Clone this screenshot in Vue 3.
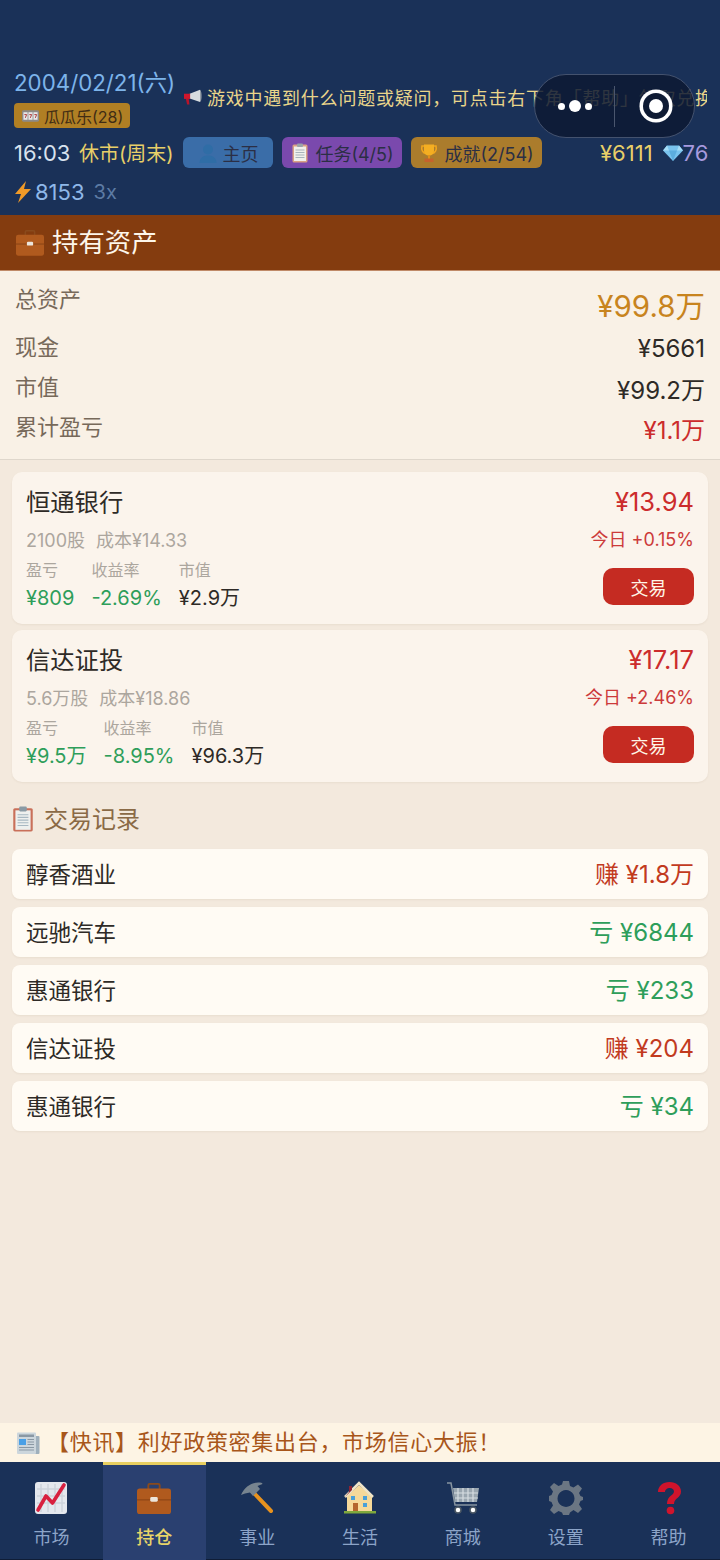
<template>
  <div class="page">
    <header class="top">
      <div class="row-one">
        <div class="date-col">
          <div class="date">2004/02/21(六)</div>
          <div class="lucky">
            <svg class="lucky-ico" viewBox="0 0 18 12"><rect width="18" height="12" rx="1.5" fill="#8d8a86"/><rect x="1.5" y="2" width="4.4" height="8" fill="#e8e8e8"/><rect x="6.8" y="2" width="4.4" height="8" fill="#e8e8e8"/><rect x="12.1" y="2" width="4.4" height="8" fill="#e8e8e8"/><path d="M2.500 4.500h2.400L3.500 8M7.800 4.500h2.400L8.800 8M13.100 4.500h2.400L14.100 8" fill="none" stroke="#a33" stroke-width="1"/></svg>
            <span>瓜瓜乐(28)</span>
          </div>
        </div>
        <div class="ticker">
          <svg class="horn" viewBox="0 0 20 18"><path d="M7 5 18 .8v13L7 10z" fill="#d8dde0"/><path d="M1 5h6.500v5.500H1z" fill="#d0162c"/><path d="M3 10.500h3l.8 6H4.300z" fill="#b8142a"/><path d="M18 .8c1.200 1 1.600 3.600 1.600 6.500s-.4 5.500-1.600 6.500z" fill="#9aa3aa"/></svg>
          <span class="ticker-text">游戏中遇到什么问题或疑问，可点击右下角「帮助」领取兑换</span>
        </div>
      </div>
      <div class="row-two">
        <span class="time">16:03</span>
        <span class="market">休市(周末)</span>
        <span class="chip chip-blue">
          <svg class="chip-ico" viewBox="0 0 20 20"><circle cx="10" cy="6.500" r="5" fill="#2f6da6"/><path d="M1.500 20c0-5 3.500-7.500 8.500-7.500s8.500 2.500 8.500 7.500z" fill="#2f6da6"/></svg>
          主页
        </span>
        <span class="chip chip-purple">
          <svg class="chip-ico" viewBox="0 0 20 20"><rect x="2.500" y="1.500" width="15" height="18" rx="1.500" fill="#d9a184"/><rect x="4" y="3.500" width="12" height="14.500" fill="#f0f0ec"/><rect x="7" y=".5" width="6" height="3.500" rx="1" fill="#9aa3aa"/><path d="M5.500 7h9M5.500 9.500h9M5.500 12h9M5.500 14.500h9" stroke="#a8b4bc" stroke-width="1"/></svg>
          任务(4/5)
        </span>
        <span class="chip chip-gold">
          <svg class="chip-ico" viewBox="0 0 20 20"><path d="M3 3h14c1 4-1 7-4 7.500H7C4 10 2 7 3 3z" fill="none" stroke="#f0a51e" stroke-width="1.600"/><path d="M5 1.500h10v6c0 3-2 5-5 5s-5-2-5-5z" fill="#f4ae22"/><rect x="9" y="12" width="2" height="4" fill="#e0901a"/><rect x="5.500" y="15.500" width="9" height="3.500" rx=".5" fill="#c6622c"/></svg>
          成就(2/54)
        </span>
        <span class="money">¥6111</span>
        <span class="gems">
          <svg class="gem" viewBox="0 0 20 16"><path d="M4 .5h12l4 5-10 10.500L0 5.500z" fill="#79c3ee"/><path d="M6 5.500h8L10 16z" fill="#5cadde"/><path d="M4 .5 6 5.500H0zM16 .5l-2 5h6z" fill="#a6dcf6"/></svg>
          <span>76</span>
        </span>
      </div>
      <div class="row-three">
        <svg class="bolt" viewBox="0 0 18 22"><path d="M12 0 1 13h6l-3 9L17 8h-7z" fill="#f09a28"/></svg>
        <span class="energy">8153</span>
        <span class="speed">3x</span>
      </div>
      <div class="capsule">
        <div class="dots"><i></i><i class="big"></i><i></i></div>
        <div class="cap-line"></div>
        <div class="cap-target"><i></i></div>
      </div>
    </header>

    <div class="title-bar">
      <svg class="case" viewBox="0 0 36 34"><use href="#case-shape"/></svg>
      <span>持有资产</span>
    </div>

    <section class="summary">
      <div class="sum-row sum-total"><span class="sum-label">总资产</span><span class="sum-total-val">¥99.8万</span></div>
      <div class="sum-row"><span class="sum-label">现金</span><span class="sum-val">¥5661</span></div>
      <div class="sum-row"><span class="sum-label">市值</span><span class="sum-val">¥99.2万</span></div>
      <div class="sum-row"><span class="sum-label">累计盈亏</span><span class="sum-val red">¥1.1万</span></div>
    </section>

    <section class="holdings">
      <div v-for="h in holdings" :key="h.name" class="card">
        <div class="card-left">
          <div class="card-name">{{ h.name }}</div>
          <div class="card-sub"><span>{{ h.shares }}</span><span>成本{{ h.cost }}</span></div>
          <div class="card-stats">
            <div><div class="stat-label">盈亏</div><div class="stat-val green">{{ h.pnl }}</div></div>
            <div><div class="stat-label">收益率</div><div class="stat-val green">{{ h.rate }}</div></div>
            <div><div class="stat-label">市值</div><div class="stat-val">{{ h.value }}</div></div>
          </div>
        </div>
        <div class="card-right">
          <div class="card-price">{{ h.price }}</div>
          <div class="card-today">今日 {{ h.today }}</div>
          <button class="trade">交易</button>
        </div>
      </div>
    </section>

    <div class="rec-title">
      <svg class="rec-ico" viewBox="0 0 20 24"><rect x="1" y="2" width="18" height="21.500" rx="1.500" fill="#c9705a"/><rect x="3" y="4" width="14" height="18" fill="#eef0ee"/><rect x="6.500" y=".5" width="7" height="4.500" rx="1" fill="#8a9aa4"/><path d="M5 8h10M5 10.500h10M5 13h10M5 15.500h10M5 18h10" stroke="#a8b8c2" stroke-width="1"/></svg>
      <span>交易记录</span>
    </div>
    <section class="records">
      <div v-for="(r, i) in records" :key="i" class="rec">
        <span class="rec-name">{{ r.name }}</span>
        <span class="rec-val" :class="r.win ? 'win' : 'lose'">{{ r.text }}</span>
      </div>
    </section>

    <div class="spacer"></div>

    <div class="news">
      <svg class="news-ico" viewBox="0 0 24 24"><rect x="18" y="5" width="5.500" height="18" rx="1" fill="#9fb0bc"/><rect x="1" y="1.500" width="19" height="21.500" rx="1" fill="#ccd6dc"/><rect x="3" y="3.500" width="15" height="2.500" fill="#8a98a4"/><rect x="3" y="8" width="7" height="6" fill="#4aa0e6"/><path d="M11.500 8.500H18M11.500 11H18M11.500 13.500H18M3 16.500h15M3 19h15" stroke="#8a98a4" stroke-width="1.200"/></svg>
      <span>【快讯】利好政策密集出台，市场信心大振！</span>
    </div>

    <nav class="tabs">
      <div class="tab">
        <svg class="tab-ico" viewBox="0 0 34 34"><rect x="1" y="1" width="32" height="32" rx="3" fill="#e4e8ee"/><path d="M7 3v28M14 3v28M21 3v28M28 3v28M3 8h28M3 15h28M3 22h28" stroke="#cdd3dc" stroke-width="1.500"/><path d="M4 29 12 15l6.500 7L30 4" fill="none" stroke="#d8203f" stroke-width="3.600" stroke-linecap="round" stroke-linejoin="round"/></svg>
        <span>市场</span>
      </div>
      <div class="tab active">
        <svg class="tab-ico" viewBox="0 0 36 34"><g id="case-shape"><path d="M12 8V3.500C12 2.500 12.800 2 13.500 2h9c.7 0 1.500.5 1.500 1.500V8" fill="none" stroke="#8a4a1c" stroke-width="2"/><rect x="0" y="7" width="36" height="27" rx="3" fill="#b05a1e"/><path d="M0 19h36" stroke="#8f4716" stroke-width="1.500"/><rect x="14" y="16" width="8" height="5" rx="1.500" fill="#ece6dc"/></g></svg>
        <span>持仓</span>
      </div>
      <div class="tab">
        <svg class="tab-ico" viewBox="0 0 34 34"><path d="M12 10 31 30" stroke="#e8921e" stroke-width="4" stroke-linecap="round"/><path d="M1 14C5 5 13 0 22 2l.5 1-5 2 2.500 3-7 7-3-3.500-5 1z" fill="#77848f"/></svg>
        <span>事业</span>
      </div>
      <div class="tab">
        <svg class="tab-ico" viewBox="0 0 34 34"><path d="M4 30V15L16 4l13 11v15z" fill="#f6d99a"/><path d="M2 16 16 2l14 14" fill="none" stroke="#efe4c8" stroke-width="2.500"/><path d="M2 16 9 9V5H6v6z" fill="#8a2434"/><rect x="10" y="22" width="5" height="8" fill="#b5652e"/><rect x="8" y="15" width="4" height="4" fill="#4aa0d8"/><rect x="20" y="15" width="4" height="4" fill="#4aa0d8"/><rect x="20" y="22" width="4" height="4" fill="#4aa0d8"/><rect x="1" y="30" width="32" height="2.500" fill="#7fa83c"/></svg>
        <span>生活</span>
      </div>
      <div class="tab">
        <svg class="tab-ico" viewBox="0 0 34 34"><path d="M1 2h4l4 22h22" fill="none" stroke="#8794a0" stroke-width="1.500"/><path d="M7 7h26l-2 14H9z" fill="#9aa6b0"/><path d="M12 7v14M17 7v14M22 7v14M27 7v14M8 12h24M9 17h23" stroke="#d6dde2" stroke-width="1.200"/><circle cx="12" cy="29" r="3" fill="#fff" stroke="#4b5763" stroke-width="1.500"/><circle cx="27" cy="29" r="3" fill="#fff" stroke="#4b5763" stroke-width="1.500"/></svg>
        <span>商城</span>
      </div>
      <div class="tab">
        <svg class="tab-ico" viewBox="0 0 34 34"><path fill="#6b7683" fill-rule="evenodd" d="M14 0h6l1 5 3.500 1.500 4.500-3 4 4-3 4.500L31.500 15l2.500 1v3l-2.500 1-1.500 3.500 3 4.500-4 4-4.500-3L21 31.500 20 34h-6l-1-2.500L9.500 30 5 33l-4-4 3-4.500L2.500 21 0 20v-5l2.500-1L4 10.500 1 6l4-4 4.500 3L13 3.500zM17 9a8.500 8.500 0 1 0 .01 0z"/></svg>
        <span>设置</span>
      </div>
      <div class="tab">
        <svg class="tab-ico" viewBox="0 0 34 34"><path d="M6 11C6 5 11 1 17.500 1S29 5 29 10.500c0 6.500-7 6.500-7 12.500h-7c0-8.500 7-8.500 7-12.500 0-2-1.900-3.500-4.200-3.500S13 8.500 13 11z" fill="#d0142c"/><circle cx="18.500" cy="29.500" r="3.800" fill="#d0142c"/></svg>
        <span>帮助</span>
      </div>
    </nav>
  </div>
</template>

<script setup>
const holdings = [
  { name: '恒通银行', shares: '2100股', cost: '¥14.33', pnl: '¥809', rate: '-2.69%', value: '¥2.9万', price: '¥13.94', today: '+0.15%' },
  { name: '信达证投', shares: '5.6万股', cost: '¥18.86', pnl: '¥9.5万', rate: '-8.95%', value: '¥96.3万', price: '¥17.17', today: '+2.46%' }
]

const records = [
  { name: '醇香酒业', text: '赚 ¥1.8万', win: true },
  { name: '远驰汽车', text: '亏 ¥6844', win: false },
  { name: '惠通银行', text: '亏 ¥233', win: false },
  { name: '信达证投', text: '赚 ¥204', win: true },
  { name: '惠通银行', text: '亏 ¥34', win: false }
]
</script>

<style>
html, body {
  margin: 0;
  padding: 0;
  background: #f3e9dd;
}
</style>

<style scoped>
.page {
  width: 720px;
  height: 1560px;
  display: flex;
  flex-direction: column;
  background: #f3e9dd;
  font-family: Inter, "Noto Sans CJK SC", sans-serif;
  overflow: hidden;
}

.top {
  position: relative;
  height: 215px;
  box-sizing: border-box;
  padding: 69px 0 0 14px;
  background: #1a3158;
  overflow: hidden;
}

.row-one {
  display: flex;
  height: 60px;
}

.date-col {
  width: 169px;
  flex: none;
}

.date {
  font-size: 22.300px;
  line-height: 28px;
  color: #7db4ea;
  white-space: nowrap;
}

.lucky {
  display: inline-flex;
  align-items: center;
  gap: 5px;
  height: 25px;
  margin-top: 6px;
  padding: 0 7px 0 8px;
  border-radius: 4px;
  background: #b07f24;
  color: #3f2c14;
  font-size: 16px;
}

.lucky-ico {
  width: 17px;
  height: 12px;
}

.ticker {
  flex: 1;
  display: flex;
  align-items: center;
  gap: 5px;
  height: 56px;
  overflow: hidden;
  margin-right: 13px;
  min-width: 0;
}

.horn {
  width: 19px;
  height: 17px;
  flex: none;
}

.ticker-text {
  font-size: 18px;
  letter-spacing: 0.77px;
  color: #e9d58a;
  white-space: nowrap;
}

.row-two {
  display: flex;
  align-items: center;
  height: 31px;
  margin-top: 8px;
}

.time {
  font-size: 22px;
  color: #d8e2ee;
  width: 65px;
}

.market {
  font-size: 20px;
  color: #e8cf68;
  width: 104px;
  white-space: nowrap;
}

.chip {
  display: inline-flex;
  align-items: center;
  justify-content: center;
  gap: 5px;
  height: 31px;
  border-radius: 6px;
  font-size: 18px;
  color: #2b2f45;
  white-space: nowrap;
  margin-right: 9px;
}

.chip-ico {
  width: 20px;
  height: 20px;
}

.chip-blue {
  width: 90px;
  background: #3a6da8;
}

.chip-purple {
  width: 120px;
  background: #7a49ad;
}

.chip-gold {
  width: 131px;
  background: #ab7c2c;
}

.money {
  margin-left: 49px;
  font-size: 22px;
  color: #e8cf68;
}

.gems {
  display: inline-flex;
  align-items: center;
  margin-left: 10px;
  font-size: 22px;
  color: #a79adf;
}

.gem {
  width: 20px;
  height: 16px;
}

.row-three {
  display: flex;
  align-items: center;
  height: 30px;
  margin-top: 9px;
}

.bolt {
  width: 18px;
  height: 22px;
}

.energy {
  font-size: 22px;
  color: #8fb8e8;
  margin-left: 3px;
}

.speed {
  font-size: 20px;
  color: #5d7ba4;
  margin-left: 9px;
}

.capsule {
  position: absolute;
  left: 534px;
  top: 74px;
  width: 161px;
  height: 64px;
  box-sizing: border-box;
  border: 1.500px solid #44526e;
  border-radius: 32px;
  background: rgba(13, 25, 50, 0.85);
  display: flex;
  align-items: center;
}

.dots {
  width: 79px;
  display: flex;
  align-items: center;
  justify-content: center;
  gap: 4px;
}

.dots i {
  width: 7px;
  height: 7px;
  border-radius: 50%;
  background: #fff;
}

.dots i.big {
  width: 12px;
  height: 12px;
}

.cap-line {
  width: 1px;
  height: 41px;
  background: #4a566e;
}

.cap-target {
  flex: 1;
  display: flex;
  align-items: center;
  justify-content: center;
  padding-left: 3px;
}

.cap-target i {
  width: 14px;
  height: 14px;
  border-radius: 50%;
  background: #fff;
  box-shadow: 0 0 0 6px #0e1a33, 0 0 0 9.500px #fff;
}

.title-bar {
  height: 56px;
  flex: none;
  display: flex;
  align-items: center;
  gap: 8px;
  padding-left: 16px;
  box-sizing: border-box;
  background: #843c0f;
  border-bottom: 1px solid #c08a68;
  color: #fdf6ea;
  font-size: 26.400px;
}

.title-bar span {
  padding-bottom: 4px;
}

.case {
  width: 28px;
  height: 27px;
}

.summary {
  height: 189px;
  flex: none;
  box-sizing: border-box;
  padding: 9px 15px 0 15px;
  background: #f9f1e6;
  border-bottom: 1px solid #dfd7cc;
}

.sum-row {
  display: flex;
  justify-content: space-between;
  align-items: center;
  height: 40px;
}

.sum-total {
  height: 48px;
  align-items: flex-start;
}

.sum-label {
  font-size: 22px;
  color: #77695a;
  line-height: 38px;
  padding-bottom: 2px;
}

.sum-total-val {
  font-size: 29.500px;
  color: #c8841e;
  line-height: 52px;
}

.sum-val {
  font-size: 24px;
  color: #2e2a26;
}

.sum-val.red {
  color: #cc2c2c;
}

.holdings {
  padding: 12px 12px 0;
  display: flex;
  flex-direction: column;
  gap: 6px;
}

.card {
  height: 152px;
  box-sizing: border-box;
  padding: 13px 14px 0;
  display: flex;
  justify-content: space-between;
  background: #fbf4ec;
  border-radius: 10px;
  box-shadow: 0 1px 2px rgba(120, 90, 60, 0.08);
}

.card-name {
  font-size: 24.300px;
  line-height: 34px;
  color: #2e2a26;
}

.card-sub {
  display: flex;
  gap: 11px;
  margin-top: 9px;
  font-size: 18px;
  line-height: 26px;
  color: #aca69e;
}

.card-stats {
  display: flex;
  gap: 17px;
  margin-top: 5px;
}

.stat-label {
  font-size: 16px;
  line-height: 22px;
  margin-bottom: 2px;
  color: #aca69e;
}

.stat-val {
  font-size: 20px;
  line-height: 30px;
  color: #2e2a26;
  white-space: nowrap;
}

.stat-val.green {
  color: #2e9e5a;
}

.card-right {
  display: flex;
  flex-direction: column;
  align-items: flex-end;
  margin-top: -1px;
}

.card-price {
  font-size: 25.500px;
  line-height: 36px;
  color: #cc2c2c;
}

.card-today {
  margin-top: 7px;
  font-size: 18px;
  line-height: 26px;
  color: #cc3a3a;
}

.trade {
  width: 91px;
  height: 37px;
  margin-top: 15px;
  border: none;
  padding: 0;
  border-radius: 10px;
  background: #c52b22;
  color: #fff6e8;
  font-family: inherit;
  font-size: 18px;
}

.rec-title {
  display: flex;
  align-items: center;
  gap: 10px;
  height: 36px;
  margin: 19px 0 12px 12px;
  font-size: 24px;
  color: #8a6a46;
}

.rec-title span {
  padding-bottom: 4px;
}

.rec-ico {
  width: 22px;
  height: 26px;
}

.records {
  padding: 0 12px;
  display: flex;
  flex-direction: column;
  gap: 8px;
}

.rec {
  height: 50px;
  box-sizing: border-box;
  padding: 0 14px 3px;
  display: flex;
  align-items: center;
  justify-content: space-between;
  background: #fffbf4;
  border-radius: 8px;
  box-shadow: 0 1px 2px rgba(120, 90, 60, 0.08);
}

.rec-name {
  font-size: 22.500px;
  color: #2e2a26;
}

.rec-val {
  font-size: 24px;
}

.rec-val.win {
  color: #c23a1e;
}

.rec-val.lose {
  color: #2e9e5a;
}

.spacer {
  flex: 1;
}

.news {
  height: 39px;
  flex: none;
  display: flex;
  align-items: center;
  gap: 7px;
  padding-left: 16px;
  background: #fdf4e4;
  color: #a8561a;
  font-size: 22px;
  letter-spacing: 0.7px;
  white-space: nowrap;
}

.news span {
  padding-bottom: 6px;
}

.news-ico {
  width: 24px;
  height: 24px;
}

.tabs {
  height: 98px;
  flex: none;
  display: flex;
  background: #1a3158;
  box-shadow: inset 0 -1px 0 #0f1d36;
}

.tab {
  flex: 1;
  display: flex;
  flex-direction: column;
  align-items: center;
  box-sizing: border-box;
  padding-top: 16px;
  border-top: 3px solid transparent;
  font-size: 18px;
  color: #8ca4c8;
}

.tab span {
  margin-top: 10px;
  line-height: 26px;
}

.tab-ico {
  width: 34px;
  height: 34px;
}

.tab.active {
  background: #2a4070;
  border-top-color: #e8cf60;
  color: #e8d468;
  font-weight: 500;
}
</style>
